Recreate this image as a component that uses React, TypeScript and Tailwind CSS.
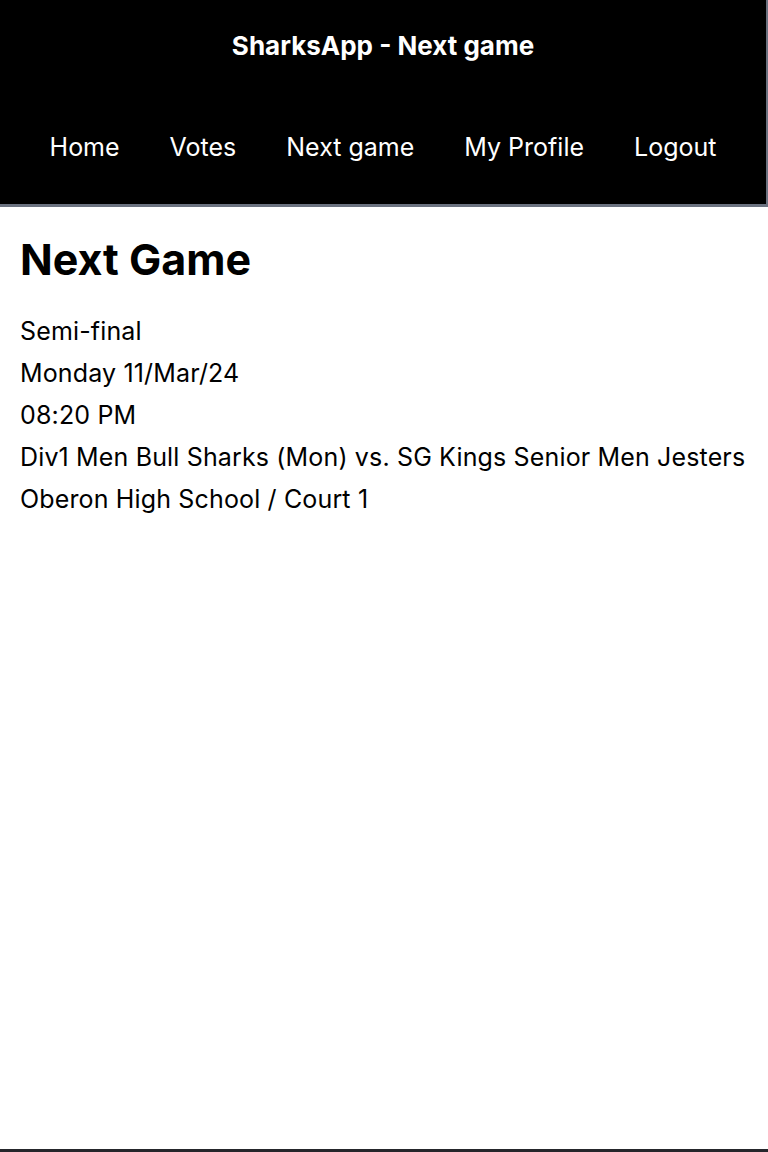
import React from 'react';

const navItems = ['Home', 'Votes', 'Next game', 'My Profile', 'Logout'];

const gameInfo = [
  'Semi-final',
  'Monday 11/Mar/24',
  '08:20 PM',
  'Div1 Men Bull Sharks (Mon) vs. SG Kings Senior Men Jesters',
  'Oberon High School / Court 1',
];

export default function App() {
  return (
    <div
      className="h-[1152px] flex flex-col bg-white border-b-[3px] border-[#25262b]"
      style={{ fontFamily: 'Inter, "Noto Sans", sans-serif' }}
    >
      <header className="bg-black text-white border-b-[3px] border-r-[2px] border-[#6b7280]">
        <div className="h-[91px] flex items-center justify-center">
          <h1 className="text-[26px] font-bold">SharksApp - Next game</h1>
        </div>
        <nav className="h-[113px] flex items-center justify-center gap-[50px]">
          {navItems.map((item) => (
            <a key={item} href="#" className="text-[25px]">
              {item}
            </a>
          ))}
        </nav>
      </header>

      <main className="flex-1 px-[20px] pt-[24px] text-black">
        <h2 className="text-[43px] font-bold leading-[56px] mb-[23px]">Next Game</h2>
        <div className="flex flex-col">
          {gameInfo.map((line) => (
            <p key={line} className="text-[25px] leading-[42px] tracking-[0.15px]">
              {line}
            </p>
          ))}
        </div>
      </main>
    </div>
  );
}
